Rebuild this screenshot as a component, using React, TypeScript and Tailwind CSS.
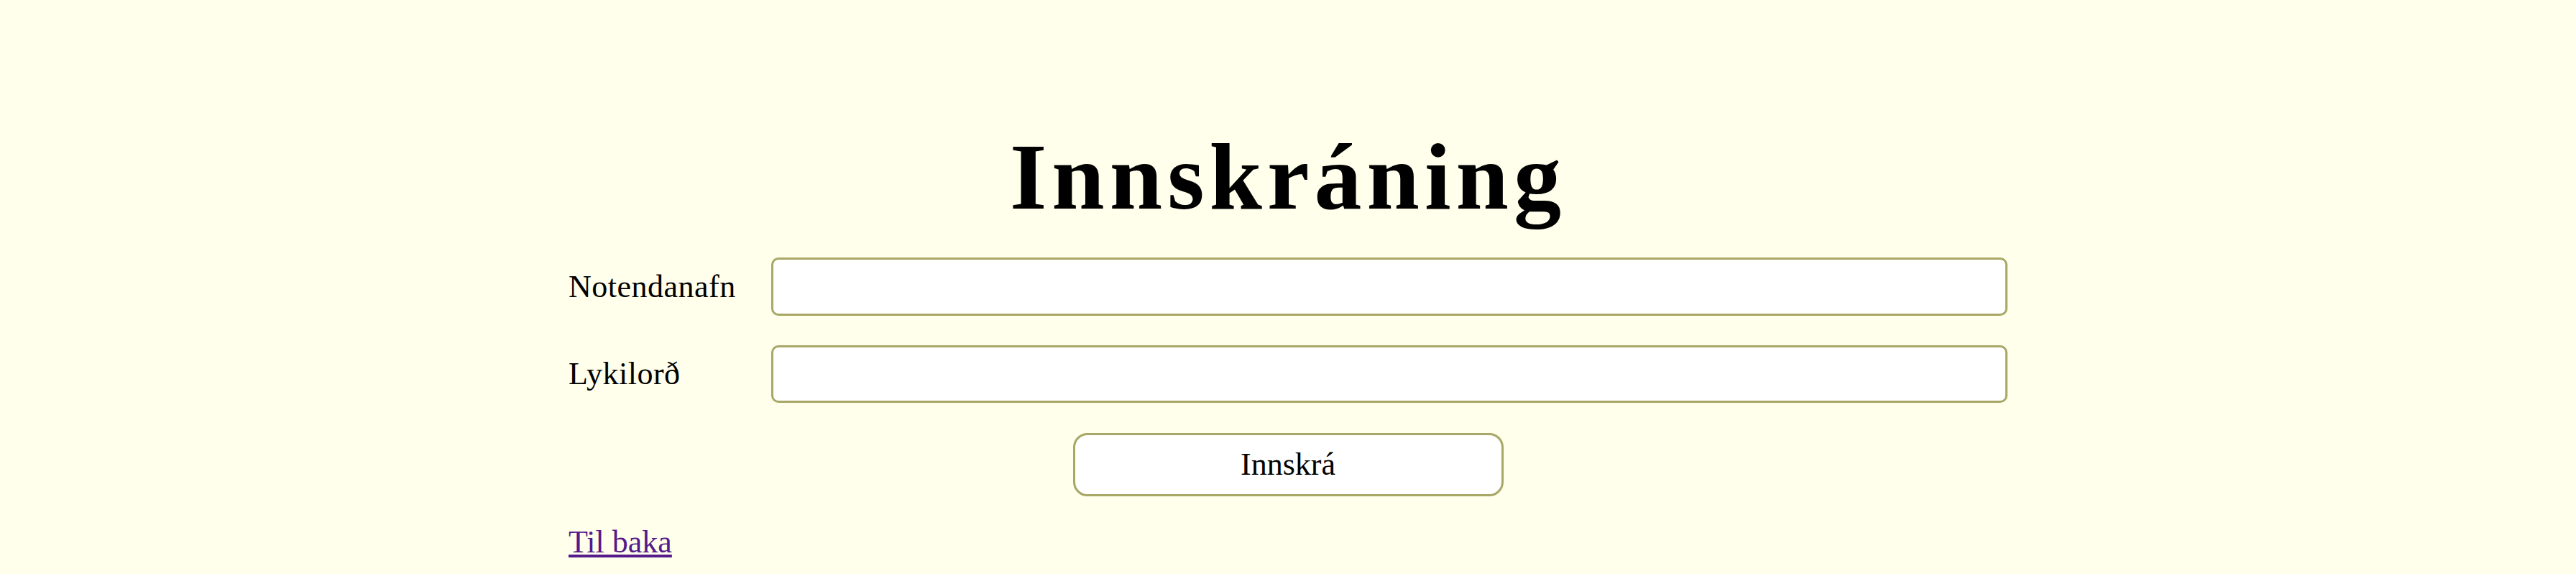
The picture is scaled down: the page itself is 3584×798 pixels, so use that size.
export default function App() {
  return (
    <div
      className="min-h-[798px] w-full bg-[#ffffeb] text-black"
      style={{ fontFamily: '"Liberation Serif", "Times New Roman", serif' }}
    >
      <div className="mx-auto w-[2002px] pt-[180px]">
        <h1 className="text-center text-[132px] font-bold leading-none tracking-[7px]">
          Innskráning
        </h1>

        <form className="mt-[46px] flex flex-col" onSubmit={(e) => e.preventDefault()}>
          <div className="flex items-center">
            <label htmlFor="username" className="w-[282px] text-[44px] leading-none tracking-[0.5px]">
              Notendanafn
            </label>
            <input
              id="username"
              type="text"
              className="h-[81px] flex-1 rounded-[10px] border-[3px] border-[#a8a765] bg-white px-4 text-[44px] outline-none"
            />
          </div>

          <div className="mt-[41px] flex items-center">
            <label htmlFor="password" className="w-[282px] text-[44px] leading-none tracking-[0.5px]">
              Lykilorð
            </label>
            <input
              id="password"
              type="password"
              className="h-[80px] flex-1 rounded-[10px] border-[3px] border-[#a8a765] bg-white px-4 text-[44px] outline-none"
            />
          </div>

          <button
            type="submit"
            className="mx-auto mt-[42px] h-[88px] w-[599px] rounded-[20px] border-[3px] border-[#a8a765] bg-white text-[44px] leading-none"
          >
            Innskrá
          </button>
        </form>

        <a href="#" className="mt-[42px] inline-block text-[44px] leading-none text-[#551a8b] underline">
          Til baka
        </a>
      </div>
    </div>
  );
}
